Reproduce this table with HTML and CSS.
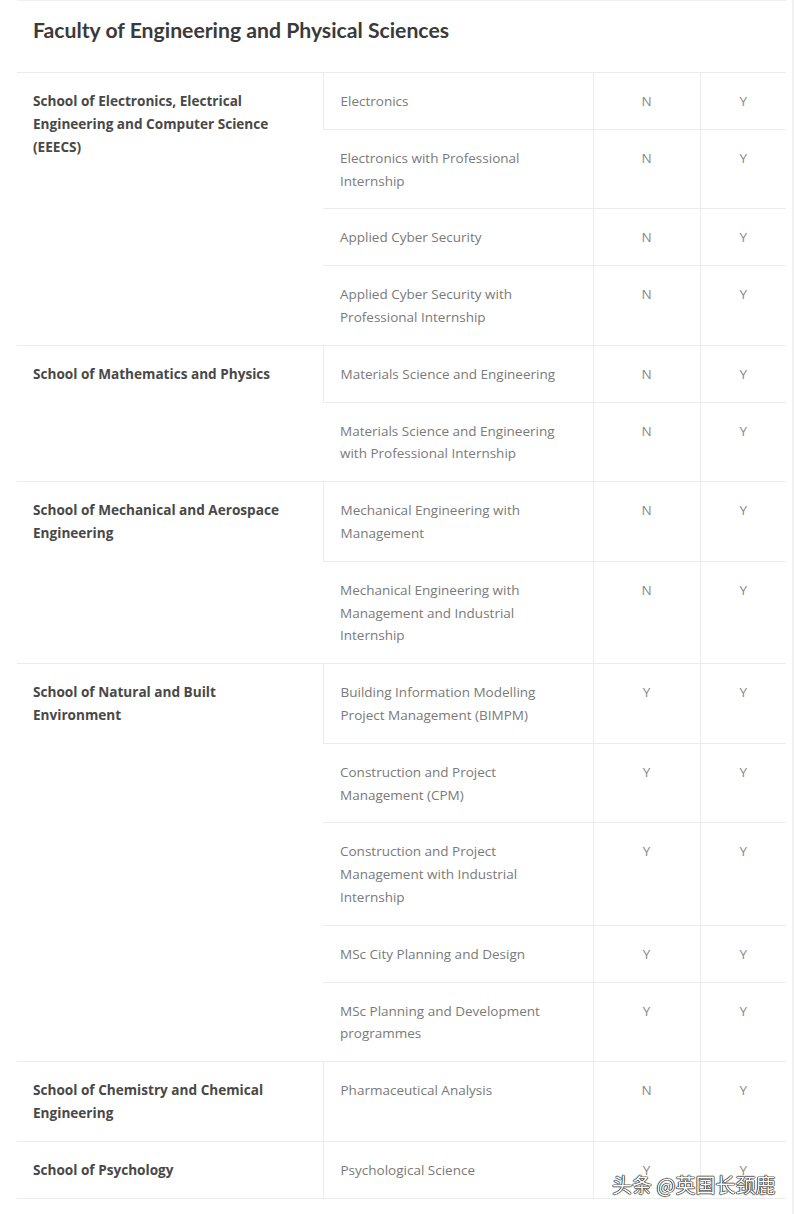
FILE: index.html
```html
<!DOCTYPE html>
<html lang="en">
<head>
<meta charset="utf-8">
<title>Faculty of Engineering and Physical Sciences</title>
<link rel="stylesheet" href="styles.css">
</head>
<body>
<div class="page">
  <section class="faculty">
    <h2 class="faculty-title">Faculty of Engineering and Physical Sciences</h2>
    <table class="courses">
      <colgroup>
        <col class="c-school">
        <col class="c-course">
        <col class="c-flag1">
        <col class="c-flag2">
      </colgroup>
      <tbody>
        <tr>
          <td class="school" rowspan="4">School of Electronics, Electrical Engineering and Computer Science (EEECS)</td>
          <td class="course">Electronics</td><td class="flag">N</td><td class="flag">Y</td>
        </tr>
        <tr><td class="course">Electronics with Professional Internship</td><td class="flag">N</td><td class="flag">Y</td></tr>
        <tr><td class="course">Applied Cyber Security</td><td class="flag">N</td><td class="flag">Y</td></tr>
        <tr><td class="course">Applied Cyber Security with Professional Internship</td><td class="flag">N</td><td class="flag">Y</td></tr>

        <tr>
          <td class="school" rowspan="2">School of Mathematics and Physics</td>
          <td class="course">Materials Science and Engineering</td><td class="flag">N</td><td class="flag">Y</td>
        </tr>
        <tr><td class="course">Materials Science and Engineering with Professional Internship</td><td class="flag">N</td><td class="flag">Y</td></tr>

        <tr>
          <td class="school" rowspan="2">School of Mechanical and Aerospace Engineering</td>
          <td class="course">Mechanical Engineering with Management</td><td class="flag">N</td><td class="flag">Y</td>
        </tr>
        <tr><td class="course">Mechanical Engineering with Management and Industrial Internship</td><td class="flag">N</td><td class="flag">Y</td></tr>

        <tr>
          <td class="school" rowspan="5">School of Natural and Built Environment</td>
          <td class="course">Building Information Modelling Project Management (BIMPM)</td><td class="flag">Y</td><td class="flag">Y</td>
        </tr>
        <tr><td class="course">Construction and Project Management (CPM)</td><td class="flag">Y</td><td class="flag">Y</td></tr>
        <tr><td class="course">Construction and Project Management with Industrial Internship</td><td class="flag">Y</td><td class="flag">Y</td></tr>
        <tr><td class="course">MSc City Planning and Design</td><td class="flag">Y</td><td class="flag">Y</td></tr>
        <tr><td class="course">MSc Planning and Development programmes</td><td class="flag">Y</td><td class="flag">Y</td></tr>

        <tr>
          <td class="school">School of Chemistry and Chemical Engineering</td>
          <td class="course">Pharmaceutical Analysis</td><td class="flag">N</td><td class="flag">Y</td>
        </tr>
        <tr>
          <td class="school">School of Psychology</td>
          <td class="course">Psychological Science</td><td class="flag">Y</td><td class="flag">Y</td>
        </tr>
      </tbody>
    </table>
  </section>
  <div class="watermark">头条 @英国长颈鹿</div>
</div>
</body>
</html>
```
FILE: styles.css
```css
html, body {
  margin: 0;
  padding: 0;
  background: #ffffff;
}

.page {
  position: relative;
  width: 794px;
  height: 1214px;
  box-sizing: border-box;
  border-right: 2px solid #f1f1f1;
  overflow: hidden;
}

.faculty {
  margin-left: 17px;
  width: 769px;
  border-top: 1px solid #f0f0f0;
}

.faculty-title {
  margin: 0;
  height: 71px;
  box-sizing: border-box;
  padding: 15px 0 0 16px;
  font-family: Lato, "Open Sans", sans-serif;
  font-weight: 700;
  font-size: 21.2px;
  line-height: 28px;
  color: #3a3a3a;
}

.courses {
  width: 769px;
  table-layout: fixed;
  border-collapse: collapse;
  font-family: "Open Sans", "Liberation Sans", sans-serif;
  font-size: 13.5px;
  line-height: 22.8px;
}

.c-school { width: 306px; }
.c-course { width: 270px; }
.c-flag1 { width: 107px; }
.c-flag2 { width: 86px; }

.courses td {
  vertical-align: top;
  border-top: 1px solid #ececec;
  border-bottom: 1px solid #ececec;
  padding: 17px 16px 16px;
}

.courses td + td {
  border-left: 1px solid #ececec;
}

.courses td.school {
  padding-right: 30px;
  font-size: 13.6px;
  font-weight: 700;
  color: #484848;
}

.courses td.course {
  padding-left: 17px;
  padding-right: 26px;
  color: #7a7a7a;
}

.courses td.flag {
  text-align: center;
  color: #8a8a8a;
  padding-left: 4px;
  padding-right: 4px;
}

.watermark {
  position: absolute;
  left: 612px;
  top: 1171px;
  font-family: "Noto Sans CJK SC", sans-serif;
  font-size: 20px;
  line-height: 28px;
  color: #ffffff;
  text-shadow: 0 0 1px #000, 0 0 1px #000, 0 0 1px #000, 0 0 1px #000;
}
```
